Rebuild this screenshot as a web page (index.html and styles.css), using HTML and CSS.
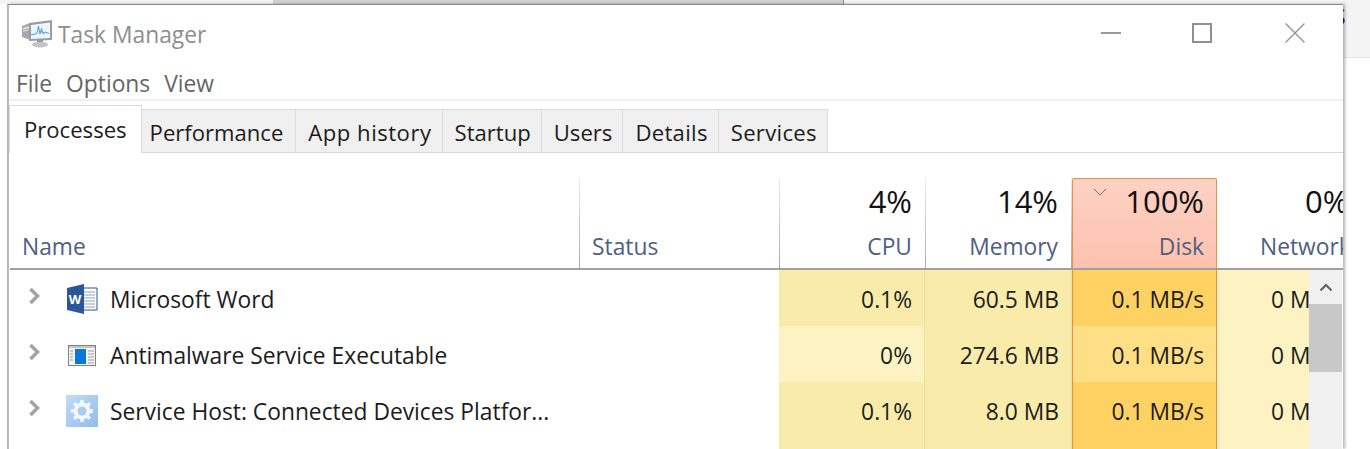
FILE: index.html
```html
<!DOCTYPE html>
<html lang="en">
<head>
    <meta charset="UTF-8">
    <title>Task Manager</title>
    <link rel="stylesheet" href="styles.css">
</head>
<body>
    <div class="top-strip">
        <div class="strip-a"></div>
        <div class="strip-b"></div>
        <div class="strip-c"></div>
    </div>
    <div class="desk">
        <div class="window">
            <div class="titlebar">
                <svg class="app-icon" width="32" height="30" viewBox="0 0 32 30">
                    <path d="M1 8l8-3v17l-8-3z" fill="#a8a8a8"/>
                    <path d="M2 10l6-2v2l-6 2zM2 13l6-2v1l-6 2z" fill="#e2e2e2"/>
                    <path d="M8 5l23-3v20l-23 1z" fill="#9a9ea3"/>
                    <path d="M10 7l19-2.500v15.500l-19 1z" fill="#eef5fc"/>
                    <path d="M10 17l4-1 2-1 1.500-7 1.500 8 1.500-5 1.500 4.500 2-1.500 4 1.500" fill="none" stroke="#5a9edc" stroke-width="1.100"/>
                    <ellipse cx="19" cy="26.500" rx="8" ry="3" fill="#c4c4c4"/>
                    <path d="M16 22h6v2h-6z" fill="#9a9a9a"/>
                </svg>
                <span class="title-text">Task Manager</span>
                <div class="win-buttons">
                    <svg width="20" height="20" viewBox="0 0 20 20"><path d="M0 10h20" stroke="#9a9a9a" stroke-width="2"/></svg>
                    <svg width="20" height="20" viewBox="0 0 20 20"><rect x="1" y="1" width="18" height="18" fill="none" stroke="#8f8f8f" stroke-width="2"/></svg>
                    <svg class="close-btn" width="20" height="20" viewBox="0 0 20 20"><path d="M0.500 0.500l19 19M19.500 0.500l-19 19" stroke="#9a9a9a" stroke-width="1.500" fill="none"/></svg>
                </div>
            </div>
            <div class="menubar">
                <span>File</span>
                <span>Options</span>
                <span>View</span>
            </div>
            <div class="tabs">
                <div class="tab active">Processes</div>
                <div class="tab first">Performance</div>
                <div class="tab spaced">App history</div>
                <div class="tab">Startup</div>
                <div class="tab">Users</div>
                <div class="tab spaced-less">Details</div>
                <div class="tab spaced-less">Services</div>
            </div>
            <div class="header-row">
                <div class="head"><span class="label">Name</span></div>
                <div class="head"><span class="label">Status</span></div>
                <div class="head num"><span class="pct">4%</span><span class="label">CPU</span></div>
                <div class="head num"><span class="pct">14%</span><span class="label">Memory</span></div>
                <div class="head num head-disk">
                    <svg class="sort" width="14" height="8" viewBox="0 0 14 8"><path d="M1 1l6 6 6-6" fill="none" stroke="#7a6a64" stroke-width="1"/></svg>
                    <span class="pct">100%</span><span class="label">Disk</span>
                </div>
                <div class="head head-net"><span class="pct">0%</span><span class="label">Network</span></div>
            </div>
            <div class="body-area">
                <div class="rows">
                    <div class="row">
                        <div class="cell name-cell">
                            <svg class="chev" width="14" height="18" viewBox="0 0 14 18"><path d="M2.500 2l7 7-7 7" fill="none" stroke="#a3a3a3" stroke-width="3.500"/></svg>
                            <svg class="proc-icon" width="32" height="32" viewBox="0 0 32 32">
                                <path d="M12 5h19v22h-19z" fill="#fff" stroke="#2b5797" stroke-width="1"/>
                                <path d="M18 9h11M18 12h11M18 15h11M18 18h11M18 21h11M18 24h11" stroke="#8aa0c0" stroke-width="1"/>
                                <path d="M1 5l17-4v30l-17-4z" fill="#2b579a"/>
                                <text class="word-w" x="9" y="21" text-anchor="middle">W</text>
                            </svg>
                            <span>Microsoft Word</span>
                        </div>
                        <div class="cell"></div>
                        <div class="cell num c-mid">0.1%</div>
                        <div class="cell num c-mid">60.5 MB</div>
                        <div class="cell num c-disk">0.1 MB/s</div>
                        <div class="cell c-net">0 Mbps</div>
                    </div>
                    <div class="row">
                        <div class="cell name-cell">
                            <svg class="chev" width="14" height="18" viewBox="0 0 14 18"><path d="M2.500 2l7 7-7 7" fill="none" stroke="#a3a3a3" stroke-width="3.500"/></svg>
                            <svg class="proc-icon" width="32" height="32" viewBox="0 0 32 32">
                                <rect x="2.500" y="6.500" width="27" height="20" fill="#f4f4f4" stroke="#7d8186"/>
                                <path d="M3 7h26v2h-26z" fill="#c3c6ca"/>
                                <rect x="9" y="10" width="11" height="15" fill="#0a78d7"/>
                                <path d="M4 12h3M4 15h3M4 18h3M4 21h3M22 12h6M22 15h6M22 18h6M22 21h6M22 24h6" stroke="#9a9da1" stroke-width="1"/>
                            </svg>
                            <span>Antimalware Service Executable</span>
                        </div>
                        <div class="cell"></div>
                        <div class="cell num c-low">0%</div>
                        <div class="cell num c-mid">274.6 MB</div>
                        <div class="cell num c-disk-low">0.1 MB/s</div>
                        <div class="cell c-net">0 Mbps</div>
                    </div>
                    <div class="row">
                        <div class="cell name-cell">
                            <svg class="chev" width="14" height="18" viewBox="0 0 14 18"><path d="M2.500 2l7 7-7 7" fill="none" stroke="#a3a3a3" stroke-width="3.500"/></svg>
                            <svg class="proc-icon" width="32" height="32" viewBox="0 0 32 32">
                                <defs>
                                    <linearGradient id="gear-bg" x1="0" y1="0" x2="1" y2="1">
                                        <stop offset="0" stop-color="#c3dcf5"/>
                                        <stop offset="1" stop-color="#8fbdec"/>
                                    </linearGradient>
                                </defs>
                                <rect width="32" height="32" fill="url(#gear-bg)"/>
                                <circle cx="16" cy="16" r="6.500" fill="none" stroke="#f2f7fc" stroke-width="4"/>
                                <path d="M16 5v22M5 16h22M8.200 8.200l15.600 15.600M23.800 8.200l-15.600 15.600" stroke="#f2f7fc" stroke-width="3.500"/>
                                <circle cx="16" cy="16" r="4.500" fill="#a9ccf0"/>
                            </svg>
                            <span>Service Host: Connected Devices Platfor...</span>
                        </div>
                        <div class="cell"></div>
                        <div class="cell num c-mid">0.1%</div>
                        <div class="cell num c-mid">8.0 MB</div>
                        <div class="cell num c-disk">0.1 MB/s</div>
                        <div class="cell c-net">0 Mbps</div>
                    </div>
                    <div class="row">
                        <div class="cell"></div>
                        <div class="cell"></div>
                        <div class="cell c-mid"></div>
                        <div class="cell c-mid"></div>
                        <div class="cell c-disk"></div>
                        <div class="cell c-net"></div>
                    </div>
                </div>
                <div class="scrollbar">
                    <div class="scroll-up">
                        <svg width="14" height="9" viewBox="0 0 14 9"><path d="M1.500 7.500l5.500-5.500 5.500 5.500" fill="none" stroke="#606060" stroke-width="2"/></svg>
                    </div>
                    <div class="scroll-thumb"></div>
                </div>
            </div>
        </div>
        <div class="behind">
            <div class="behind-top"><span>S</span></div>
        </div>
    </div>
</body>
</html>
```

FILE: styles.css
```css
html, body { margin: 0; height: 449px; overflow: hidden; background: white; }
body { font-family: "Open Sans", "Noto Sans", sans-serif; font-size: 22.8px; color: #1c1c1c; }

.top-strip { display: flex; height: 4px; }
.strip-a { width: 273px; background: #f4f4f4; }
.strip-b { width: 570px; background: #d2d2d2; border-right: 1px solid #8a8a8a; }
.strip-c { flex: 1; background: #f4f4f4; }

.desk { display: flex; height: 445px; }
.window { margin-left: 7px; width: 1336px; flex: none; background: white; border-top: 1px solid #8c8c8c; border-left: 2px solid #b8b8b8; box-sizing: border-box; box-shadow: 2px 0 3px rgba(0,0,0,0.3); display: flex; flex-direction: column; overflow: hidden; position: relative; z-index: 1; }
.behind { flex: 1; }
.behind-top { height: 53px; background: #f4f4f4; border-bottom: 1px solid #e4e4e4; overflow: hidden; white-space: nowrap; }
.behind-top span { display: block; margin: -1px 0 0 -9px; font-size: 21px; color: #222; }

.titlebar { display: flex; align-items: center; height: 55px; flex: none; }
.app-icon { margin: 0 5px 0 12px; }
.title-text { color: #8e8e8e; position: relative; top: 2px; }
.win-buttons { margin-left: auto; display: flex; gap: 71px; margin-right: 38px; }
.close-btn { margin-left: 2px; }

.menubar { display: flex; gap: 14px; height: 41px; flex: none; align-items: center; padding: 7px 0 0 7px; box-sizing: border-box; color: #666; border-bottom: 2px solid #f0f0f0; }

.tabs { display: flex; align-items: flex-end; height: 52px; flex: none; border-bottom: 1px solid #d8d8d8; box-sizing: border-box; font-size: 22.1px; }
.tab { height: 43px; line-height: 44px; padding: 0 10px 0 12px; background: #f0f0f0; border: 1px solid #dcdcdc; border-left: none; border-bottom: none; box-sizing: border-box; white-space: nowrap; }
.tab.first { padding: 0 12px 0 8px; }
.tab.spaced { letter-spacing: 0.5px; }
.tab.spaced-less { letter-spacing: 0.3px; }
.tab.active { height: 48px; line-height: 46px; padding: 0 14px; background: white; border-left: 1px solid #dcdcdc; margin-bottom: -1px; }

.header-row { display: grid; grid-template-columns: 570px 200px 146px 146px 145px 126px; margin: 25px 0 0 1px; height: 92px; flex: none; border-bottom: 2px solid #a0a0a0; box-sizing: border-box; }
.head { display: flex; flex-direction: column; justify-content: flex-end; border-right: 1px solid #b8b8b8; border-image: linear-gradient(#eeeeee, #a8a8a8) 1; box-sizing: border-box; padding: 0 13px 6px 12px; position: relative; overflow: hidden; white-space: nowrap; }
.head.num { align-items: flex-end; }
.head-net { border-right: none; padding-left: 43px; }
.head-net .pct { margin-left: 45px; }
.head-disk { background: linear-gradient(#fdd2c4, #fcc1ae); border: 1px solid #e88f4a; border-image: none; border-bottom: none; border-radius: 2px 2px 0 0; padding-right: 12px; }
.label { color: #4f6080; line-height: 30px; }
.pct { font-size: 31px; color: #111; line-height: 44px; margin-bottom: 9px; }
.sort { position: absolute; left: 20px; top: 9px; }

.body-area { display: flex; flex: 1; min-height: 0; margin-left: 1px; }
.rows { width: 1299px; flex: none; overflow: hidden; }
.row { display: grid; grid-template-columns: 569px 200px 146px 147px 145px 126px; height: 56px; }
.cell { display: flex; align-items: center; box-sizing: border-box; padding: 2px 12px 0 0; white-space: nowrap; }
.cell.num { justify-content: flex-end; }
.name-cell { padding-left: 18px; }
.chev { margin-top: -6px; }
.proc-icon { margin: 0 12px 0 24px; flex: none; }
.word-w { font-size: 13px; font-weight: bold; fill: white; }
.c-mid { background: #f9ebaa; border-right: 1px solid #f0e09e; }
.c-low { background: #fdf3c2; border-right: 1px solid #f0e09e; }
.c-disk { background: #fdd263; border-left: 1px solid #e88f4a; border-right: 1px solid #e88f4a; }
.c-disk-low { background: #fedf86; border-left: 1px solid #e88f4a; border-right: 1px solid #e88f4a; }
.c-net { background: #fdf3c2; padding-left: 54px; }

.scrollbar { width: 33px; flex: none; background: #f0f0f0; }
.scroll-up { height: 34px; display: flex; justify-content: center; align-items: center; }
.scroll-thumb { height: 68px; background: #c8c8c8; }
```
